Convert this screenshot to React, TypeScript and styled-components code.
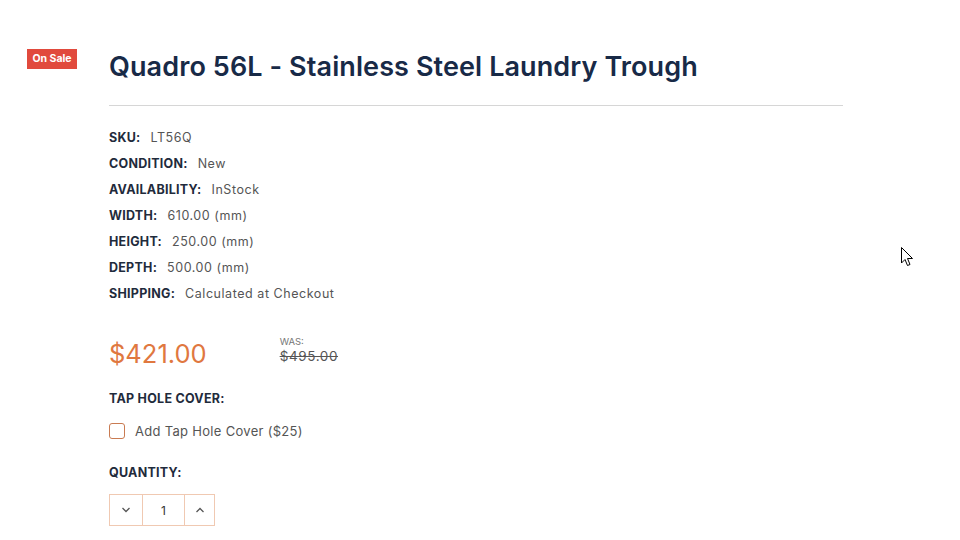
import React from "react";
import styled, { createGlobalStyle } from "styled-components";

const Global = createGlobalStyle`
  html, body { margin: 0; padding: 0; background: #ffffff; }
  body { font-family: "Inter", "Liberation Sans", sans-serif; width: 960px; height: 540px; overflow: hidden; }
  * { box-sizing: border-box; }
`;

const Page = styled.div`
  position: relative;
  display: flex;
  align-items: flex-start;
  padding: 49px 0 0 27px;
  width: 960px;
  height: 540px;
`;

const BadgeCol = styled.div`
  width: 82px;
  flex: none;
`;

const Badge = styled.span`
  display: block;
  background: #e14a3d;
  color: #fff;
  font-size: 10.5px;
  font-weight: 700;
  line-height: 20px;
  height: 20px;
  width: 50px;
  text-align: center;
`;

const Main = styled.div`
  width: 734px;
  display: flex;
  flex-direction: column;
`;

const Title = styled.h1`
  margin: 0;
  padding-bottom: 20px;
  border-bottom: 1px solid #d6d6d6;
  font-size: 27px;
  line-height: 36px;
  font-weight: 600;
  color: #182a47;
  letter-spacing: 0.1px;
`;

const Specs = styled.dl`
  margin: 19px 0 0;
  display: flex;
  flex-direction: column;
`;

const SpecRow = styled.div`
  display: flex;
  gap: 10px;
  font-size: 12.5px;
  line-height: 26px;
  height: 26px;
`;

const Label = styled.dt`
  margin: 0;
  font-weight: 700;
  color: #1f2b3c;
  text-transform: uppercase;
  letter-spacing: 0.25px;
`;

const Value = styled.dd`
  margin: 0;
  color: #555;
  letter-spacing: 0.55px;
`;

const PriceRow = styled.div`
  display: flex;
  align-items: flex-start;
  gap: 73px;
  margin-top: 29px;
`;

const Price = styled.div`
  font-size: 25.5px;
  line-height: 36px;
  color: #e0783f;
  font-weight: 400;
`;

const Was = styled.div`
  display: flex;
  flex-direction: column;
`;

const WasLabel = styled.span`
  font-size: 9.5px;
  line-height: 11px;
  color: #777;
  text-transform: uppercase;
`;

const WasPrice = styled.span`
  font-size: 13.5px;
  line-height: 18px;
  color: #555;
  letter-spacing: 0.6px;
  text-decoration: line-through;
`;

const SectionLabel = styled.div<{ $mt: number }>`
  margin-top: ${(p) => p.$mt}px;
  font-size: 12.5px;
  line-height: 18px;
  font-weight: 700;
  color: #1f2b3c;
  text-transform: uppercase;
  letter-spacing: 0.25px;
`;

const CheckRow = styled.label`
  display: flex;
  align-items: center;
  gap: 10px;
  margin-top: 14px;
  font-size: 13px;
  line-height: 18px;
  color: #555;
  letter-spacing: 0.3px;
`;

const Box = styled.span`
  width: 16px;
  height: 16px;
  border: 1px solid #c97b52;
  border-radius: 3px;
  flex: none;
`;

const Qty = styled.div`
  display: flex;
  margin-top: 12px;
  width: 106px;
  height: 32px;
  border: 1px solid #f0c9b2;
`;

const QtyCell = styled.div<{ $w: number; $divider?: boolean }>`
  width: ${(p) => p.$w}px;
  display: flex;
  align-items: center;
  justify-content: center;
  font-size: 12px;
  color: #333;
  border-left: ${(p) => (p.$divider ? "1px solid #f0c9b2" : "none")};
`;

const Cursor = styled.svg`
  position: absolute;
  left: 901px;
  top: 247px;
`;

const Chevron = ({ up }: { up?: boolean }) => (
  <svg width="10" height="6" viewBox="0 0 10 6">
    <path
      d={up ? "M1.5 5 L5 1.5 L8.5 5" : "M1.5 1 L5 4.5 L8.5 1"}
      fill="none"
      stroke="#555"
      strokeWidth="1.3"
    />
  </svg>
);

const specs: [string, string][] = [
  ["SKU:", "LT56Q"],
  ["Condition:", "New"],
  ["Availability:", "InStock"],
  ["Width:", "610.00 (mm)"],
  ["Height:", "250.00 (mm)"],
  ["Depth:", "500.00 (mm)"],
  ["Shipping:", "Calculated at Checkout"],
];

export default function App() {
  return (
    <>
      <Global />
      <Page>
        <BadgeCol>
          <Badge>On Sale</Badge>
        </BadgeCol>
        <Main>
          <Title>Quadro 56L - Stainless Steel Laundry Trough</Title>
          <Specs>
            {specs.map(([k, v]) => (
              <SpecRow key={k}>
                <Label>{k}</Label>
                <Value>{v}</Value>
              </SpecRow>
            ))}
          </Specs>
          <PriceRow>
            <Price>$421.00</Price>
            <Was>
              <WasLabel>Was:</WasLabel>
              <WasPrice>$495.00</WasPrice>
            </Was>
          </PriceRow>
          <SectionLabel $mt={18}>Tap Hole Cover:</SectionLabel>
          <CheckRow>
            <Box />
            Add Tap Hole Cover ($25)
          </CheckRow>
          <SectionLabel $mt={24}>Quantity:</SectionLabel>
          <Qty>
            <QtyCell $w={32}>
              <Chevron />
            </QtyCell>
            <QtyCell $w={42} $divider>
              1
            </QtyCell>
            <QtyCell $w={30} $divider>
              <Chevron up />
            </QtyCell>
          </Qty>
        </Main>
        <Cursor width="13" height="20" viewBox="0 0 13 20">
          <path
            d="M0.5 0.5 L0.5 16 L4 12.5 L6.5 18.5 L9 17.5 L6.5 11.5 L11.5 11.5 Z"
            fill="#fff"
            stroke="#000"
            strokeWidth="1"
          />
        </Cursor>
      </Page>
    </>
  );
}
